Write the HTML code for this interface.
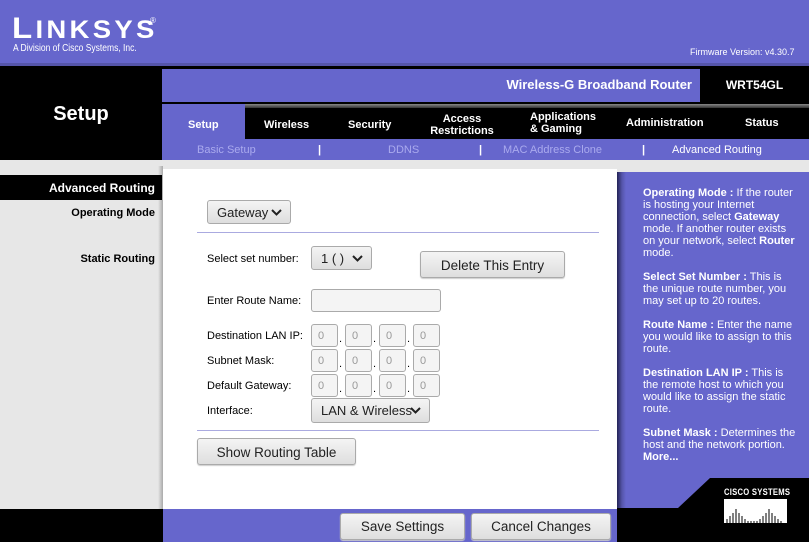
<!DOCTYPE html>
<html><head><meta charset="utf-8"><style>
*{margin:0;padding:0;box-sizing:border-box}
body{width:809px;height:542px;overflow:hidden;position:relative;font-family:"Liberation Sans",Arial,sans-serif;background:#e7e7e7}
.a{position:absolute}
.btn{position:absolute;border:1px solid #aaa;border-radius:3px;background:linear-gradient(#f4f4f4,#dedede);font-family:"Liberation Sans",sans-serif;font-size:13.5px;color:#222;text-align:center;box-shadow:0 1px 1px #ccc}
.sel{position:absolute;border:1px solid #aaa;border-radius:3px;background:linear-gradient(#f4f4f4,#dedede);font-family:"Liberation Sans",sans-serif;font-size:13px;color:#222;padding-left:9px}
.sel svg{position:absolute;right:8px;top:8px}
.ip{position:absolute;width:27px;height:23px;border:1px solid #aaa;border-radius:3px;background:#f4f4f4;font-family:"Liberation Sans",sans-serif;font-size:11px;color:#999;padding:5px 0 0 6px}
.lbl{position:absolute;left:207px;font-size:11px;color:#000}
.dot{position:absolute;font-size:11px;color:#000}
.help{position:absolute;left:643px;width:155px;color:#fff;font-size:11px;line-height:12px}
.help b{font-weight:bold}
</style></head><body>
<div class="a" style="left:0;top:0;width:809px;height:66px;background:#6666cc;border-bottom:3px solid #5555aa"></div>
<div class="a" style="left:12px;top:14px;color:#fff;font-size:30px;font-weight:bold;letter-spacing:3px;line-height:30px;transform:scaleX(1.1);transform-origin:left">L<span style="font-size:25px">INKSYS</span></div>
<div class="a" style="left:150px;top:16px;color:#fff;font-size:8px">®</div>
<div class="a" style="left:13px;top:43px;color:#fff;font-size:10px;transform:scaleX(.85);transform-origin:left">A Division of Cisco Systems, Inc.</div>
<div class="a" style="left:690px;top:47px;color:#fff;font-size:9px">Firmware Version: v4.30.7</div>
<div class="a" style="left:0;top:66px;width:809px;height:94px;background:#000"></div>
<div class="a" style="left:0;top:103px;width:162px;color:#fff;font-size:20px;font-weight:bold;text-align:center">Setup</div>
<div class="a" style="left:162px;top:69px;width:538px;height:33px;background:#6666cc"></div>
<div class="a" style="left:162px;top:77px;width:530px;text-align:right;color:#fff;font-size:13px;font-weight:bold">Wireless-G Broadband Router</div>
<div class="a" style="left:700px;top:78px;width:109px;text-align:center;color:#fff;font-size:12px;font-weight:bold">WRT54GL</div>
<div class="a" style="left:245px;top:104px;width:564px;height:4px;background:linear-gradient(#888,#333)"></div>
<div class="a" style="left:162px;top:104px;width:83px;height:36px;background:#6666cc"></div>
<div class="a" style="left:162px;top:139px;width:647px;height:21px;background:#6666cc"></div>
<div class="a" style="color:#fff;font-size:11px;font-weight:bold;top:119px;left:188px">Setup</div>
<div class="a" style="color:#fff;font-size:11px;font-weight:bold;top:119px;left:264px">Wireless</div>
<div class="a" style="color:#fff;font-size:11px;font-weight:bold;top:119px;left:348px">Security</div>
<div class="a" style="color:#fff;font-size:11px;font-weight:bold;top:113px;left:418px;width:88px;text-align:center;line-height:12px">Access<br>Restrictions</div>
<div class="a" style="color:#fff;font-size:11px;font-weight:bold;top:111px;left:530px;line-height:12px">Applications<br>&amp; Gaming</div>
<div class="a" style="color:#fff;font-size:11px;font-weight:bold;top:117px;left:626px">Administration</div>
<div class="a" style="color:#fff;font-size:11px;font-weight:bold;top:117px;left:745px">Status</div>
<div class="a" style="top:144px;left:197px;font-size:11px;color:#aaaaee">Basic Setup</div>
<div class="a" style="top:144px;left:318px;font-size:11px;color:#fff;font-weight:bold">|</div>
<div class="a" style="top:144px;left:388px;font-size:11px;color:#aaaaee">DDNS</div>
<div class="a" style="top:144px;left:479px;font-size:11px;color:#fff;font-weight:bold">|</div>
<div class="a" style="top:144px;left:503px;font-size:11px;color:#aaaaee">MAC Address Clone</div>
<div class="a" style="top:144px;left:642px;font-size:11px;color:#fff;font-weight:bold">|</div>
<div class="a" style="top:144px;left:672px;font-size:11px;color:#fff">Advanced Routing</div>
<div class="a" style="left:158px;top:166px;width:5px;height:343px;background:linear-gradient(90deg,#e7e7e7,#aaa)"></div>
<div class="a" style="left:0;top:175px;width:162px;height:25px;background:#000"></div>
<div class="a" style="left:0;top:181px;width:155px;text-align:right;color:#fff;font-size:12px;font-weight:bold">Advanced Routing</div>
<div class="a" style="left:0;top:207px;width:155px;text-align:right;color:#000;font-size:11px;font-weight:bold">Operating Mode</div>
<div class="a" style="left:0;top:253px;width:155px;text-align:right;color:#000;font-size:11px;font-weight:bold">Static Routing</div>
<div class="a" style="left:163px;top:169px;width:454px;height:340px;background:#fff"></div>
<div class="a" style="left:617px;top:172px;width:192px;height:337px;background:linear-gradient(90deg,#222255,#5555aa 5px,#6666cc 9px)"></div>
<div class="sel" style="left:207px;top:200px;width:84px;height:24px;padding-top:4px">Gateway<svg width="11" height="8"><path d="M1 1l4.5 4.5L10 1" stroke="#222" stroke-width="2" fill="none"/></svg></div>
<div class="a" style="left:197px;top:232px;width:402px;height:1px;background:#aaaae0"></div>
<div class="lbl" style="top:253px">Select set number:</div>
<div class="sel" style="left:311px;top:246px;width:61px;height:24px;padding-top:4px">1 ( )<svg width="11" height="8"><path d="M1 1l4.5 4.5L10 1" stroke="#222" stroke-width="2" fill="none"/></svg></div>
<div class="btn" style="left:420px;top:251px;width:145px;height:27px;padding-top:6px">Delete This Entry</div>
<div class="lbl" style="top:295px">Enter Route Name:</div>
<div class="a" style="left:311px;top:289px;width:130px;height:23px;border:1px solid #aaa;border-radius:3px;background:#f4f4f4"></div>
<div class="lbl" style="top:330px">Destination LAN IP:</div>
<div class="lbl" style="top:355px">Subnet Mask:</div>
<div class="lbl" style="top:380px">Default Gateway:</div>
<div class="lbl" style="top:405px">Interface:</div>
<div class="ip" style="left:311px;top:324px">0</div><div class="ip" style="left:345px;top:324px">0</div><div class="ip" style="left:379px;top:324px">0</div><div class="ip" style="left:413px;top:324px">0</div>
<div class="ip" style="left:311px;top:349px">0</div><div class="ip" style="left:345px;top:349px">0</div><div class="ip" style="left:379px;top:349px">0</div><div class="ip" style="left:413px;top:349px">0</div>
<div class="ip" style="left:311px;top:374px">0</div><div class="ip" style="left:345px;top:374px">0</div><div class="ip" style="left:379px;top:374px">0</div><div class="ip" style="left:413px;top:374px">0</div>
<div class="dot" style="left:339px;top:333px">.</div><div class="dot" style="left:373px;top:333px">.</div><div class="dot" style="left:407px;top:333px">.</div>
<div class="dot" style="left:339px;top:358px">.</div><div class="dot" style="left:373px;top:358px">.</div><div class="dot" style="left:407px;top:358px">.</div>
<div class="dot" style="left:339px;top:383px">.</div><div class="dot" style="left:373px;top:383px">.</div><div class="dot" style="left:407px;top:383px">.</div>
<div class="sel" style="left:311px;top:398px;width:119px;height:25px;padding-top:4px">LAN &amp; Wireless<svg width="11" height="8"><path d="M1 1l4.5 4.5L10 1" stroke="#222" stroke-width="2" fill="none"/></svg></div>
<div class="a" style="left:197px;top:430px;width:402px;height:1px;background:#aaaae0"></div>
<div class="btn" style="left:197px;top:438px;width:159px;height:27px;padding-top:6px">Show Routing Table</div>
<div class="help" style="top:187px"><b>Operating Mode :</b> If the router is hosting your Internet connection, select <b>Gateway</b> mode. If another router exists on your network, select <b>Router</b> mode.</div>
<div class="help" style="top:271px"><b>Select Set Number :</b> This is the unique route number, you may set up to 20 routes.</div>
<div class="help" style="top:319px"><b>Route Name :</b> Enter the name you would like to assign to this route.</div>
<div class="help" style="top:367px"><b>Destination LAN IP :</b> This is the remote host to which you would like to assign the static route.</div>
<div class="help" style="top:427px"><b>Subnet Mask :</b> Determines the host and the network portion. <b>More...</b></div>
<div class="a" style="left:0;top:509px;width:163px;height:33px;background:#000"></div>
<div class="a" style="left:163px;top:509px;width:454px;height:33px;background:#6666cc"></div>
<svg class="a" style="left:617px;top:477px" width="192" height="65"><polygon points="0,31 61,31 93,1 192,1 192,65 0,65" fill="#000"/></svg>
<div class="btn" style="left:340px;top:513px;width:125px;height:27px;padding-top:5px">Save Settings</div>
<div class="btn" style="left:471px;top:513px;width:140px;height:27px;padding-top:5px">Cancel Changes</div>
<div class="a" style="left:724px;top:487px;color:#fff;font-size:9px;font-weight:bold;letter-spacing:0.3px;transform:scaleX(.85);transform-origin:left">CISCO SYSTEMS</div>
<div class="a" style="left:724px;top:499px;width:63px;height:24px;background:#fff"></div>
<svg class="a" style="left:724px;top:499px" width="68" height="26"><g stroke="#000" stroke-width="1"><path d="M3 24v-4M6 24v-7M9 24v-10M12 24v-14M15 24v-10M18 24v-7M21 24v-4M24 24v-2M27 24v-2M30 24v-2M33 24v-2M36 24v-4M39 24v-7M42 24v-10M45 24v-14M48 24v-10M51 24v-7M54 24v-4M57 24v-2"/></g></svg>
</body></html>
